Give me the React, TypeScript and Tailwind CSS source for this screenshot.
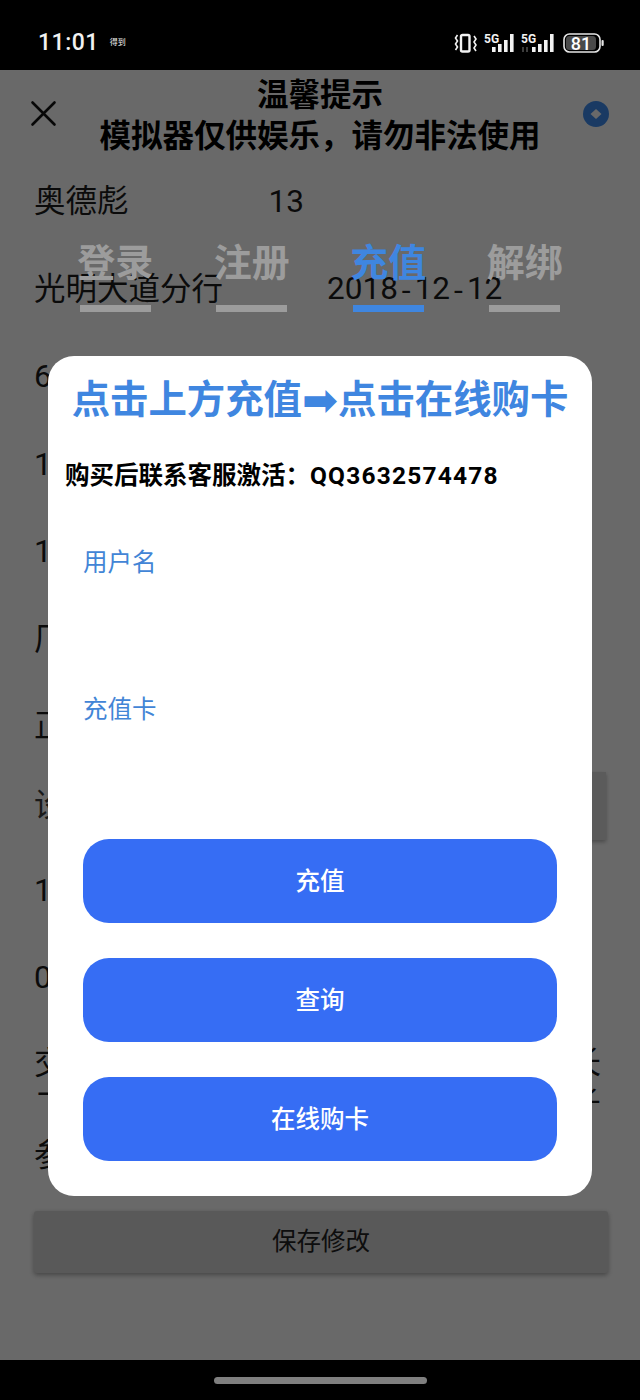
const cjk = "font-['Roboto','Noto_Sans_CJK_SC',sans-serif]";

const Tabs = [
  { id: 1, label: "登录", active: false },
  { id: 2, label: "注册", active: false },
  { id: 3, label: "充值", active: true },
  { id: 4, label: "解绑", active: false },
];

const Rows = [
  { id: 3, label: "62" },
  { id: 4, label: "13" },
  { id: 5, label: "15" },
  { id: 6, label: "厂商" },
  { id: 7, label: "正常" },
];

const Rows2 = [
  { id: 9, label: "10" },
  { id: 10, label: "00" },
];

function StatusIcons() {
  const bars = (x: number) => (
    <g fill="#f2f2f2">
      <rect x={x} y="14" width="3.6" height="5" />
      <rect x={x + 6} y="11" width="3.6" height="8" />
      <rect x={x + 12} y="7" width="3.6" height="12" />
      <rect x={x + 18} y="1" width="3.6" height="18" />
    </g>
  );
  return (
    <svg className="mt-[4px]" width="150" height="24" viewBox="0 0 150 24" fill="none">
      <rect x="7" y="2" width="8.5" height="16.5" rx="1.5" stroke="#f2f2f2" strokeWidth="2.4" />
      <path d="M3.5 2 L1.5 5 L3.5 8 L1.5 11 L3.5 14 L1.5 17" stroke="#f2f2f2" strokeWidth="1.6" />
      <path d="M20 3 L22 6 L20 9 L22 12 L20 15 L22 18" stroke="#f2f2f2" strokeWidth="1.6" />
      <text x="30" y="10" fill="#f2f2f2" fontSize="12" fontWeight="700" fontFamily="Roboto">5G</text>
      {bars(38)}
      <text x="67" y="10" fill="#f2f2f2" fontSize="12" fontWeight="700" fontFamily="Roboto">5G</text>
      <path d="M69 14v5M73 19v-5" stroke="#666" strokeWidth="1.2" />
      {bars(78)}
      <rect x="110" y="1" width="36" height="18" rx="5.5" stroke="#e6e6e6" strokeWidth="1.6" />
      <rect x="112" y="3" width="30" height="14" rx="3.5" fill="#4a4a4a" />
      <rect x="147.5" y="7" width="2.2" height="6" rx="1" fill="#e6e6e6" />
      <text x="127" y="16.5" fill="#fff" fontSize="18" fontWeight="500" textAnchor="middle" fontFamily="Roboto">81</text>
    </svg>
  );
}

function Dash() {
  return <span className="font-['Liberation_Mono',monospace] text-[28px]">-</span>;
}

export default function App() {
  return (
    <div className={`${cjk} flex h-[1400px] w-[640px] flex-col overflow-hidden bg-black`}>
      {/* status bar */}
      <div className="flex h-[70px] shrink-0 items-center justify-between pt-[16px] pr-[36px] pl-[38px] text-[#f2f2f2]">
        <div className="flex items-center gap-[11px]">
          <span className="text-[23px] font-medium tracking-[0.5px]">11:01</span>
          <span className="text-[8px] leading-none">得到</span>
        </div>
        <StatusIcons />
      </div>

      <div className="relative flex-1 overflow-hidden bg-white text-[31.5px] text-[#1c1c1c]">
        {/* page under the dialog */}
        <div className="relative flex h-[88px] flex-col items-center pt-[5px] text-[31.5px] leading-[41px] font-bold text-black">
          <div>温馨提示</div>
          <div>模拟器仅供娱乐，请勿非法使用</div>
          <svg className="absolute top-[30px] left-[30px]" width="27" height="27" viewBox="0 0 27 27" fill="none">
            <path d="M2.5 2.5 L24.5 24.5 M24.5 2.5 L2.5 24.5" stroke="#111" strokeWidth="2.6" strokeLinecap="round" />
          </svg>
          <svg className="absolute top-[31px] left-[583px]" width="26" height="26" viewBox="0 0 26 26">
            <circle cx="13" cy="13" r="13" fill="#3f8ef0" />
            <path d="M13 8 L18.5 13 L13 18 L7.5 13 Z" fill="#fff" />
          </svg>
        </div>

        <div className="px-[34px]">
          <div className="flex h-[87.5px] items-center gap-[140px]">
            <span>奥德彪</span>
            <span>13</span>
          </div>
          <div className="flex h-[87.5px] items-center gap-[104px]">
            <span>光明大道分行</span>
            <span>2018<Dash />12<Dash />12</span>
          </div>
          {Rows.map((row) => (
            <div key={row.id} className="flex h-[87.5px] items-center">
              <span>{row.label}</span>
            </div>
          ))}
          <div className="flex h-[76px] items-center justify-between">
            <span className="-mt-[5px] text-[#3d3d3d]">设备</span>
            <div className="mb-[5px] h-[68px] w-[130px] bg-[#dcdcdc] shadow-[0_2px_4px_rgba(0,0,0,0.3)]" />
          </div>
          {Rows2.map((row) => (
            <div key={row.id} className="flex h-[87.5px] items-center">
              <span>{row.label}</span>
            </div>
          ))}
          <div className="mt-[19px] h-[64px] w-[600px] overflow-hidden pt-[2px] leading-[41px] whitespace-nowrap">
            <div>交易备注信息内容仅供模拟展示使用的长</div>
            <div>二易备注信息内容仅供模拟展示使用的长</div>
          </div>
          <div className="mt-[19px] flex h-[64px] items-center">
            <span>参数</span>
          </div>
          <button className="mt-[23px] h-[62px] w-[574px] rounded-[3px] bg-[#d8d8d8] pt-[2px] text-[24.5px] text-[#222] shadow-[0_2px_5px_rgba(0,0,0,0.35)]">
            保存修改
          </button>
        </div>

        {/* dim + dialog */}
        <div className="absolute inset-0 bg-black/[0.59] pt-[168px]">
          <div className="ml-[47px] grid w-[546px] grid-cols-4">
            {Tabs.map((tab) => (
              <div key={tab.id} className="flex flex-col items-center">
                <span className={`text-[38px] leading-[50px] font-bold ${tab.active ? "text-[#3f86e0]" : "text-[#9c9c9c]"}`}>
                  {tab.label}
                </span>
                <div className={`mt-[17px] h-[7px] w-[71px] ${tab.active ? "bg-[#3f86e0]" : "bg-[#9c9c9c]"}`} />
              </div>
            ))}
          </div>

          <div className="mx-[48px] mt-[44px] h-[840px] rounded-[26px] bg-white pt-[19px]">
            <h2 className="flex h-[50px] items-center justify-center text-[38.4px] font-bold whitespace-nowrap text-[#3f86e0]">
              点击上方充值<span className="font-['DejaVu_Sans',sans-serif] text-[43px] leading-none">➡</span>点击在线购卡
            </h2>
            <p className="mt-[35px] px-[17px] text-[24.5px] leading-[32px] font-bold whitespace-nowrap text-black">
              购买后联系客服激活：<span className="tracking-[1.2px]">QQ3632574478</span>
            </p>
            <div className="mt-[55px] px-[35px]">
              <label className="block text-[24.5px] leading-[32px] text-[#4285d6]">用户名</label>
              <input className="block h-[115px] w-full bg-transparent outline-none" />
              <label className="block text-[24.5px] leading-[32px] text-[#4285d6]">充值卡</label>
              <input className="block h-[113px] w-full bg-transparent outline-none" />
              <div className="flex flex-col gap-[35px]">
                <button className="h-[84px] rounded-[26px] bg-[#366df4] pt-[2px] text-[24.5px] font-medium text-white">充值</button>
                <button className="h-[84px] rounded-[26px] bg-[#366df4] pt-[2px] text-[24.5px] font-medium text-white">查询</button>
                <button className="h-[84px] rounded-[26px] bg-[#366df4] pt-[2px] text-[24.5px] font-medium text-white">在线购卡</button>
              </div>
            </div>
          </div>
        </div>
      </div>

      {/* nav bar */}
      <div className="flex h-[40px] shrink-0 items-center justify-center">
        <div className="h-[7px] w-[213px] rounded-full bg-[#7f7f7f]" />
      </div>
    </div>
  );
}
